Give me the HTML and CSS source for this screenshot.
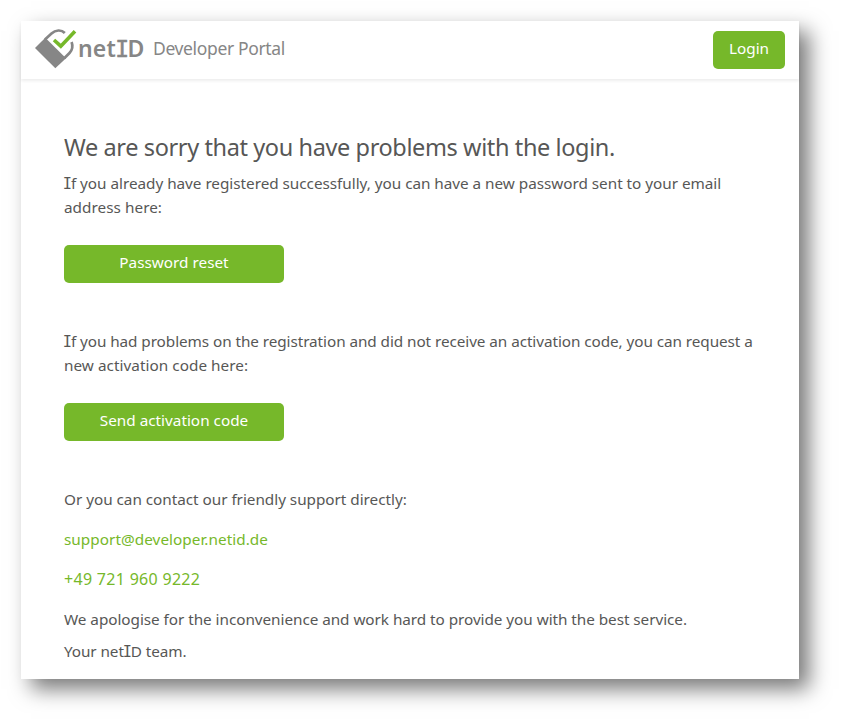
FILE: index.html
```html
<!DOCTYPE html>
<html lang="en">
<head>
<meta charset="utf-8">
<title>netID Developer Portal</title>
<link rel="stylesheet" href="styles.css">
</head>
<body>
<div class="portal">
  <header class="header">
    <svg class="mark" width="42" height="42" viewBox="0 0 42 42" fill="none">
      <path d="M0 21 10.3 10.8 31 31.2 20.3 41.3Z" fill="#868686"/>
      <path d="M10 12.6 16.5 6.6C20.5 2.8 26.3 2.4 29.8 6M29.3 31.3 34.5 26C37.6 22.8 38 19 36.6 15" stroke="#868686" stroke-width="2.7"/>
      <path d="M19 13 25.8 19.2 40 4.2" stroke="#76b82a" stroke-width="3.6"/>
    </svg>
    <span class="wordmark">net<span class="slab">I</span>D</span>
    <span class="product">Developer Portal</span>
    <button class="button login">Login</button>
  </header>
  <main class="content">
    <h1>We are sorry that you have problems with the login.</h1>
    <p class="reset"><span class="slab">I</span>f you already have registered successfully, you can have a new password sent to your email<br><span class="tail">address here:</span></p>
    <button class="button wide">Password reset</button>
    <p class="activation"><span class="slab">I</span>f you had problems on the registration and did not receive an activation code, you can request a<br><span class="tail">new activation code here:</span></p>
    <button class="button wide">Send activation code</button>
    <p class="contact">Or you can contact our friendly support directly:</p>
    <p class="link">support@developer.netid.de</p>
    <p class="link phone">+49 721 960 9222</p>
    <p class="apology">We apologise for the inconvenience and work hard to provide you with the best service.</p>
    <p class="team">Your net<span class="slab">I</span>D team.</p>
  </main>
</div>
</body>
</html>
```
FILE: styles.css
```css
* { box-sizing: border-box; }
body {
  margin: 0;
  height: 721px;
  padding: 21px;
  overflow: hidden;
  background: #fff;
  color: #575756;
  font: 16px/24px "Noto Sans", sans-serif;
}
.portal {
  width: 778px;
  height: 658px;
  background: #fff;
  box-shadow: 10px 10px 20px rgba(0, 0, 0, .53);
}
.header {
  display: flex;
  align-items: center;
  height: 58px;
  padding: 0 14px;
  box-shadow: 0 2px 3px rgba(0, 0, 0, .07);
}
.mark { flex: none; margin-top: -4px; }
.wordmark {
  width: 68px;
  margin: -4px 0 0 1px;
  color: #868686;
  font: 600 23px/30px "Noto Sans", sans-serif;
  letter-spacing: .2px;
  white-space: nowrap;
}
.slab {
  display: inline-block;
  width: .55em;
  margin-right: -.1em;
  font-family: "DejaVu Sans Mono", monospace;
  font-weight: 400;
  text-indent: -.08em;
  line-height: 1;
}
.wordmark .slab { width: .6em; margin: 0 -.06em 0 -.04em; text-indent: 0; letter-spacing: 0; -webkit-text-stroke: .5px #868686; }
.product {
  margin-left: 7px;
  margin-top: -4px;
  color: #868686;
  font-size: 17.5px;
  letter-spacing: -.36px;
  white-space: nowrap;
}
.button {
  border: 0;
  border-radius: 5px;
  height: 38px;
  padding: 0 0 4px;
  background: #76b82a;
  color: #fff;
  font: inherit;
  font-size: 15.3px;
}
.login { width: 72px; margin-left: auto; }
.content { padding: 52px 43px 0; white-space: nowrap; }
h1 { margin: 0 0 8px; font-size: 23.5px; line-height: 32px; font-weight: 400; letter-spacing: -.39px; }
p { margin: 0; font-size: 15.3px; letter-spacing: -.03px; }
.wide { display: block; width: 220px; }
.reset { margin-bottom: 26px; }
.activation { margin: 46px 0 26px; letter-spacing: -.07px; }
.tail { letter-spacing: .04px; }
.contact { margin-top: 46px; }
.link { margin-top: 16px; color: #76b82a; letter-spacing: .04px; }
.phone { font-size: 16px; letter-spacing: .3px; }
.apology { margin-top: 16px; letter-spacing: -.05px; }
.team { margin-top: 8px; letter-spacing: -.08px; }
```
